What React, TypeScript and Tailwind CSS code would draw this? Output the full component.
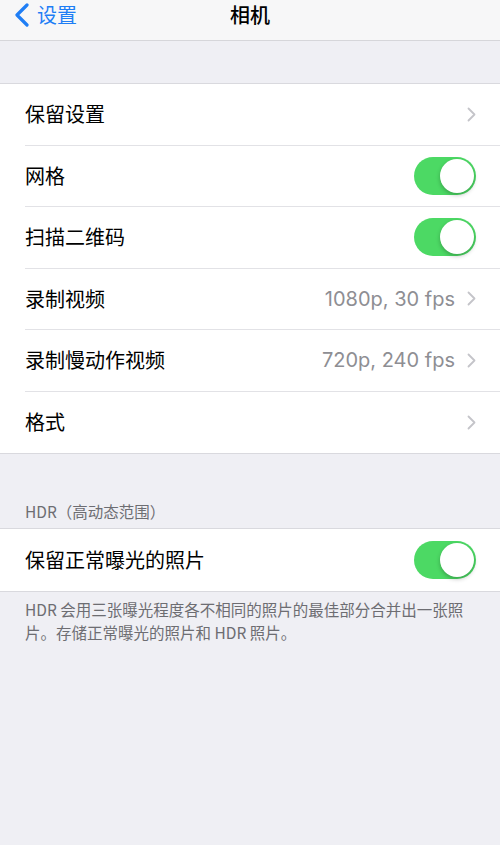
import React from 'react';

const font = { fontFamily: '"Noto Sans CJK SC", "Noto Sans", sans-serif' };

function Chevron() {
  return (
    <svg width="9" height="15" viewBox="0 0 9 15" className="ml-3 shrink-0">
      <path d="M1.5 1.5 L7.5 7.5 L1.5 13.5" fill="none" stroke="#c4c4c9" strokeWidth="1.8" strokeLinecap="round" strokeLinejoin="round" />
    </svg>
  );
}

function Toggle() {
  return (
    <div className="relative w-[62px] h-[38px] rounded-full bg-[#4cd964] shrink-0">
      <div className="absolute right-[2px] top-[2px] w-[34px] h-[34px] rounded-full bg-white shadow-[0_2px_4px_rgba(0,0,0,0.25)]" />
    </div>
  );
}

type Row = { label: string; value?: string; kind: 'link' | 'toggle' };

function Group({ rows }: { rows: Row[] }) {
  return (
    <div className="bg-white border-y border-[#d9d9de]">
      {rows.map((r, i) => (
        <div key={r.label} className="pl-[25px]">
          <div
            className={
              'h-[61.5px] flex items-center pr-[24px] ' +
              (i < rows.length - 1 ? 'border-b border-[#e2e2e6]' : '')
            }
          >
            <span className="flex-1 text-[20px] text-black">{r.label}</span>
            {r.value && (
              <span className="text-[20px] text-[#8e8e93]" style={{ fontFamily: 'Inter, "Noto Sans", sans-serif' }}>
                {r.value}
              </span>
            )}
            {r.kind === 'link' ? <Chevron /> : <Toggle />}
          </div>
        </div>
      ))}
    </div>
  );
}

export default function App() {
  return (
    <div className="w-[500px] h-[845px] bg-[#efeff4] overflow-hidden" style={font}>
      {/* Nav bar */}
      <div className="relative h-[41px] bg-[#f7f7f8] border-b border-[#d6d6da] flex items-center justify-center">
        <div className="absolute left-[14px] top-0 h-[30px] flex items-center text-[#1f7ef5]">
          <svg width="16" height="24" viewBox="0 0 16 24">
            <path d="M13 2 L3 12 L13 22" fill="none" stroke="#1f7ef5" strokeWidth="3.2" strokeLinecap="round" strokeLinejoin="round" />
          </svg>
          <span className="ml-[7px] text-[20px] leading-none">设置</span>
        </div>
        <span className="absolute top-0 h-[30px] flex items-center text-[20px] font-medium text-black leading-none">相机</span>
      </div>

      <div className="h-[42px]" />

      <Group
        rows={[
          { label: '保留设置', kind: 'link' },
          { label: '网格', kind: 'toggle' },
          { label: '扫描二维码', kind: 'toggle' },
          { label: '录制视频', value: '1080p, 30 fps', kind: 'link' },
          { label: '录制慢动作视频', value: '720p, 240 fps', kind: 'link' },
          { label: '格式', kind: 'link' },
        ]}
      />

      <div className="px-[25px] pt-[46px] pb-[6px] text-[15.5px] text-[#6d6d72] leading-[22px]">HDR（高动态范围）</div>

      <Group rows={[{ label: '保留正常曝光的照片', kind: 'toggle' }]} />

      <p className="px-[25px] pt-[6px] text-[15.5px] leading-[23px] text-[#6d6d72]">
        HDR 会用三张曝光程度各不相同的照片的最佳部分合并出一张照片。存储正常曝光的照片和 HDR 照片。
      </p>
    </div>
  );
}
